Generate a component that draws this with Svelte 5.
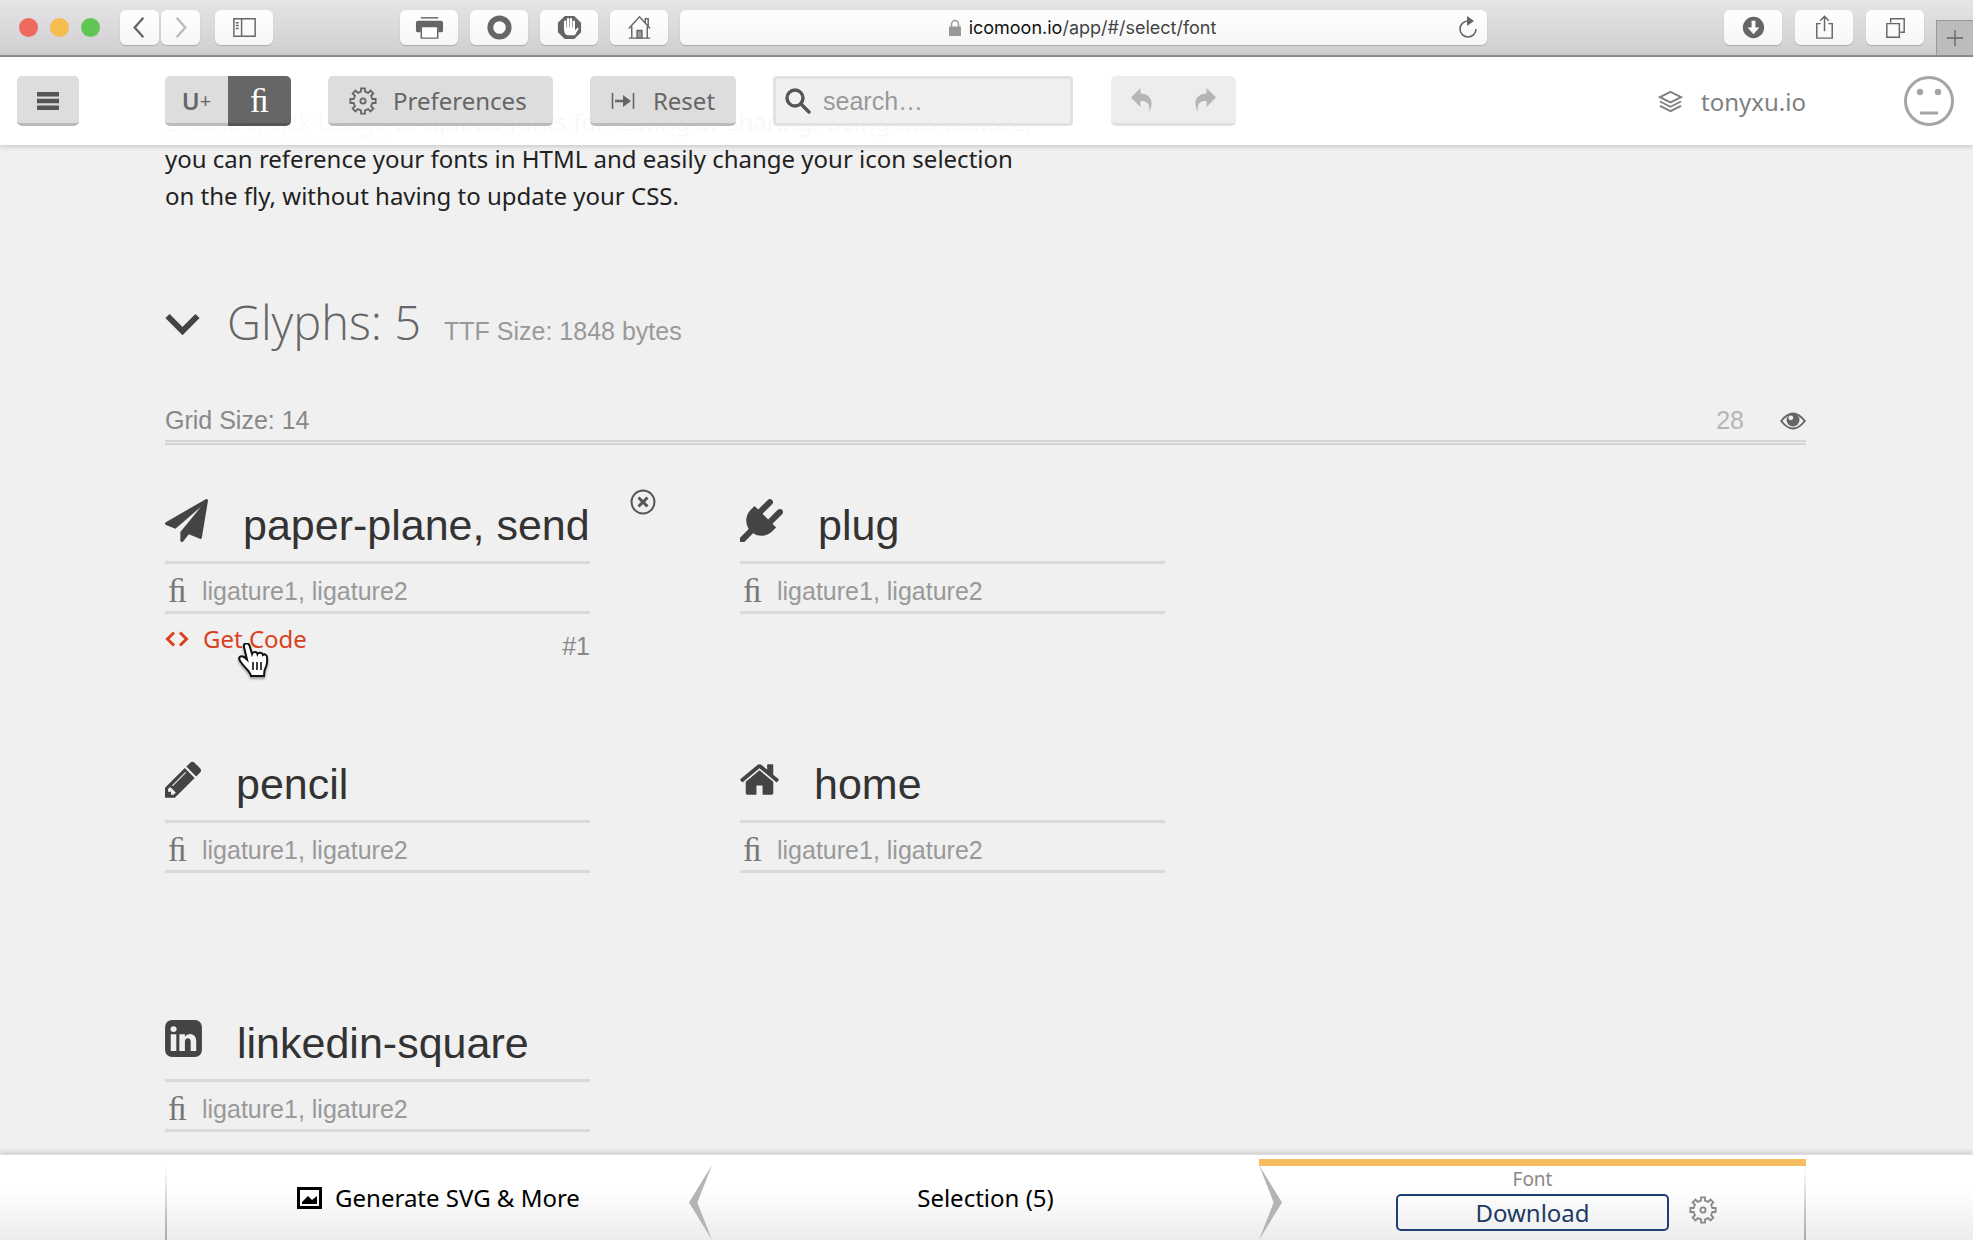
<script>
  const glyphs = [
    {
      name: 'paper-plane, send',
      box: '0 0 1792 1792',
      width: 43,
      active: true,
      path: 'M1764 11q33 24 27 64l-256 1536q-5 29-32 45-14 8-31 8-11 0-24-5l-453-185-242 295q-18 23-49 23-13 0-22-4-19-7-30.5-23.5t-11.5-36.5v-349l864-1059-1069 925-395-162q-37-14-40-55-2-40 32-59l1664-960q15-9 32-9 20 0 36 11z',
    },
    {
      name: 'plug',
      box: '0 0 1792 1792',
      width: 43,
      path: 'M1755 453q37 38 37 90.5t-37 90.5l-401 400 150 150-160 160q-163 163-389.5 186.5t-411.5-100.5l-362 362h-181v-181l362-362q-124-185-100.5-411.5t186.5-389.5l160-160 150 150 400-401q38-37 91-37t90 37 37 90.5-37 90.5l-400 401 234 234 401-400q38-37 91-37t90 37z',
    },
    {
      name: 'pencil',
      box: '128 0 1515 1792',
      width: 36,
      path: 'M491 1536l91-91-235-235-91 91v107h128v128h107zm523-928q0-22-22-22-10 0-17 7l-542 542q-7 7-7 17 0 22 22 22 10 0 17-7l542-542q7-7 7-17zm-54-192l416 416-832 832h-416v-416zm683 96q0 53-37 90l-166 166-416-416 166-165q36-38 90-38 53 0 91 38l235 234q37 39 37 91z',
    },
    {
      name: 'home',
      box: '80 0 1632 1792',
      width: 39,
      path: 'M1472 992v480q0 26-19 45t-45 19h-384v-384h-256v384h-384q-26 0-45-19t-19-45v-480q0-1 .5-3t.5-3l575-474 575 474q1 2 1 6zm223-69l-62 74q-8 9-21 11h-3q-13 0-21-7l-692-577-692 577q-12 8-24 7-13-2-21-11l-62-74q-8-10-7-23.5t11-21.5l719-599q32-26 76-26t76 26l244 204v-195q0-14 9-23t23-9h192q14 0 23 9t9 23v408l219 182q10 8 11 21.5t-7 23.5z',
    },
    {
      name: 'linkedin-square',
      box: '128 0 1536 1792',
      width: 37,
      path: 'M365 1414h231v-694h-231v694zm246-908q-1-52-36-86t-93-34-94.5 34-36.5 86q0 51 35.5 85.5t92.5 34.5h1q59 0 95-34.5t36-85.5zm585 908h231v-398q0-154-73-233t-193-79q-136 0-209 117h2v-101h-231q3 66 0 694h231v-388q0-38 7-56 15-35 45-59.5t74-24.5q116 0 116 157v371zm468-998v960q0 119-84.5 203.5t-203.5 84.5h-960q-119 0-203.5-84.5t-84.5-203.5v-960q0-119 84.5-203.5t203.5-84.5h960q119 0 203.5 84.5t84.5 203.5z',
    },
  ];

  // Outline of a cog: each tooth is a flat top between two flat valleys.
  function cog(teeth, outer, inner) {
    const step = (Math.PI * 2) / teeth;
    const at = (r, a) => `${(r * Math.sin(a)).toFixed(2)} ${(-r * Math.cos(a)).toFixed(2)}`;
    let d = '';
    for (let i = 0; i < teeth; i++) {
      const a = i * step;
      d += `${i ? 'L' : 'M'}${at(outer, a - step * 0.2)}L${at(outer, a + step * 0.2)}`;
      d += `L${at(inner, a + step * 0.27)}L${at(inner, a + step * 0.73)}`;
    }
    return d + 'Z';
  }
  const cogPath = cog(8, 12.8, 9.6);
</script>

{#snippet gear()}
  <svg class="gear" viewBox="-14 -14 28 28" aria-hidden="true">
    <path d={cogPath} />
    <circle r="2.600" />
  </svg>
{/snippet}

<div class="app">
  <div class="top">
    <div class="chrome">
      <div class="lights">
        <span class="light red"></span><span class="light yellow"></span><span class="light green"></span>
      </div>
      <div class="nav">
        <button class="tool small" aria-label="Back"><svg viewBox="0 0 30 30"><path class="heavy" d="M19 5 10 15l9 10" /></svg></button>
        <button class="tool small faint" aria-label="Forward"><svg viewBox="0 0 30 30"><path class="heavy" d="M11 5l9 10-9 10" /></svg></button>
      </div>
      <button class="tool sidebar" aria-label="Sidebar">
        <svg viewBox="0 0 30 30"><path d="M4 6h22v18H4zM12 6v18M6 10h3M6 13h3M6 16h3" /></svg>
      </button>
      <div class="extensions">
        <button class="tool" aria-label="Print">
          <svg viewBox="0 0 30 30"><path d="M6 5h18" /><path class="solid" d="M3 8q-2 0-2 2v8q0 2 2 2h3v-5h18v5h3q2 0 2-2v-8q0-2-2-2z" /><path d="M6.500 14h17v12h-17z" fill="#fff" /></svg>
        </button>
        <button class="tool" aria-label="Record">
          <svg viewBox="0 0 30 30"><circle class="ring" cx="15" cy="15" r="9.500" /></svg>
        </button>
        <button class="tool" aria-label="Block">
          <svg viewBox="0 0 30 30"><path class="solid" d="M10 3h10l7 7v10l-7 7H10l-7-7V10z" /><path class="palm" d="M10.500 17V9M13.500 16V6.500M16.500 16V6.500M19.500 17V9" /><path d="M9.500 15h11v3l3-3 1 1-4 7h-7q-4-1-4-5z" fill="#fff" stroke="none" /></svg>
        </button>
        <button class="tool" aria-label="Home">
          <svg viewBox="0 0 30 30"><path d="M4 16 15 4l11 12M7 14v12M23 14v12M4 26h22M21 10V6h3v8" /><path d="M12.500 26v-8h5v8z" fill="#999" /></svg>
        </button>
      </div>
      <div class="address">
        <svg class="lock" viewBox="0 0 14 18" aria-hidden="true"><path d="M3.500 8V5.500a3.500 4 0 0 1 7 0V8" fill="none" stroke="#999" stroke-width="1.500" /><path d="M1 7.500h12V17H1z" fill="#999" /></svg>
        <span>icomoon.io<span class="route">/app/#/select/font</span></span>
        <button class="reload" aria-label="Reload">
          <svg viewBox="0 0 22 24"><path d="M11 5a8 8 0 1 0 8 8" fill="none" stroke="#666" stroke-width="1.600" /><path d="M10 0l7 5-7 5z" fill="#666" /></svg>
        </button>
      </div>
      <div class="actions">
        <button class="tool" aria-label="Downloads">
          <svg viewBox="0 0 30 30"><circle class="solid" cx="15" cy="15" r="11" /><path d="M13 8h4v7h4l-6 7-6-7h4z" fill="#fff" stroke="none" /></svg>
        </button>
        <button class="tool" aria-label="Share">
          <svg viewBox="0 0 30 30"><path d="M11 11H7v15h16V11h-4M15 19V4M10.500 8 15 3.500 19.500 8" /></svg>
        </button>
        <button class="tool" aria-label="Tabs">
          <svg viewBox="0 0 30 30"><path d="M6 11h13v14H6zM10 10V6h14v14h-4" /></svg>
        </button>
      </div>
      <button class="newtab" aria-label="New tab"><svg viewBox="0 0 20 20"><path d="M10 1v18M1 10h18" fill="none" stroke="#666" stroke-width="1.500" /></svg></button>
    </div>

    <header>
      <button class="btn menu" aria-label="Menu"><svg viewBox="0 0 22 18"><path d="M0 0h22v4.500H0zM0 6.700h22v4.500H0zM0 13.500h22V18H0z" /></svg></button>
      <div class="modes">
        <button class="btn unicode" aria-label="Unicode">U<small>+</small></button>
        <button class="btn liga" aria-label="Ligatures">ﬁ</button>
      </div>
      <button class="btn prefs">{@render gear()}Preferences</button>
      <button class="btn reset">
        <svg viewBox="0 0 24 18" aria-hidden="true"><path d="M1.500 1v16M22.500 1v16" stroke="#666" stroke-width="1.600" /><path d="M4 7.700h8V3l8 6-8 6v-4.700H4z" /></svg>Reset
      </button>
      <label class="search">
        <svg viewBox="0 0 26 26" aria-hidden="true"><circle cx="10" cy="10" r="8" /><path d="M16 16l8 8" /></svg>
        <input type="search" placeholder="search…" aria-label="Search icons" />
      </label>
      <div class="history">
        <button aria-label="Undo"><svg viewBox="0 0 22 24"><path d="M0 9.500 9.500 0v5.500C19 6 24 13 18 24c1.500-8-2-11.500-8.500-11V19z" /></svg></button>
        <button aria-label="Redo"><svg viewBox="0 0 22 24"><path d="M22 9.500 12.500 0v5.500C3 6-2 13 4 24c-1.500-8 2-11.500 8.500-11V19z" /></svg></button>
      </div>
      <a class="project" href="#projects">
        <svg viewBox="0 0 26 24" aria-hidden="true"><path d="M13 2l11 5.500L13 13 2 7.500zM2 12l11 5.500L24 12M2 16.500 13 22l11-5.500" /></svg>tonyxu.io
      </a>
      <button class="face" aria-label="Account">
        <svg viewBox="0 0 50 50"><circle cx="25" cy="25" r="23.500" /><path d="M16 37h18" /><circle class="eye" cx="16" cy="16" r="3.200" /><circle class="eye" cx="34" cy="16" r="3.200" /></svg>
      </button>
    </header>
  </div>

  <main>
    <p class="intro">
      <a href="#usage">Enable Quick Usage</a> to upload fonts for testing or sharing. Using this feature,<br />
      you can reference your fonts in HTML and easily change your icon selection<br />
      on the fly, without having to update your CSS.
    </p>

    <div class="title">
      <button class="fold" aria-label="Collapse"><svg viewBox="0 0 35 22"><path d="M2.500 3 17.500 18 32.500 3" /></svg></button>
      <h1>Glyphs: 5</h1>
      <span class="size">TTF Size: 1848 bytes</span>
    </div>

    <div class="gridbar">
      <span>Grid Size: 14</span>
      <span class="count">28</span>
      <button class="show" aria-label="Preview">
        <svg viewBox="0 0 26 18"><path d="M1.200 9Q13-6 24.800 9 13 24 1.200 9z" fill="none" stroke="#666" stroke-width="2" /><circle cx="13" cy="8" r="6.500" fill="#666" /><circle cx="10.800" cy="5.800" r="2.400" fill="#f0f0f0" /></svg>
      </button>
    </div>

    <div class="cards">
      {#each glyphs as g}
        <section class="card">
          <div class="name">
            <svg width={g.width} height="43" viewBox={g.box} aria-hidden="true"><path d={g.path} /></svg>
            <input value={g.name} aria-label="Glyph name" />
          </div>
          <label class="ligature"><span class="fi">ﬁ</span><input placeholder="ligature1, ligature2" aria-label="Ligatures" /></label>
          {#if g.active}
            <div class="hover">
              <button class="code"><svg viewBox="0 0 24 16" aria-hidden="true"><path d="M9 1.500 2.500 8 9 14.500M15 1.500 21.500 8 15 14.500" /></svg>Get Code</button>
              <span class="index">#1</span>
            </div>
            <button class="remove" aria-label="Remove"><svg viewBox="0 0 26 26"><circle cx="13" cy="13" r="11.500" /><path class="cross" d="M8.500 8.500l9 9M17.500 8.500l-9 9" /></svg></button>
            <svg class="pointer" viewBox="0 0 32 36" aria-hidden="true">
              <path d="M7 4c-1-4 4-5 5.500-1.500L15 11c1-3 5-2.500 5.500 0 1-2 5-1.500 5.500 1 2-1.500 4 0 4 2.500 1 7-1 9-2.500 13L27 33H14c-1-5-6-8-9.500-13-3-4-3-5.500-1-6.500 2.500-1 5 1.500 6.500 3z" />
              <path class="lines" d="M16 19v8M20 19v8M24 19v8" />
            </svg>
          {/if}
        </section>
      {/each}
    </div>
  </main>

  <footer>
    <nav>
      <button class="cell first">
        <svg class="pic" viewBox="0 0 25 22" aria-hidden="true"><path d="M1.500 1.500h22v19h-22z" fill="none" stroke="#000" stroke-width="3" /><path d="M5 17v-2l6-6 4 4 5-4v8z" /></svg>
        Generate SVG &amp; More
        <svg class="arrow left" viewBox="0 0 22 76" preserveAspectRatio="none" aria-hidden="true"><path d="M22 0 0 38l22 38L8 38z" /></svg>
      </button>
      <button class="cell">Selection (5)</button>
      <div class="cell last">
        <svg class="arrow right" viewBox="0 0 22 76" preserveAspectRatio="none" aria-hidden="true"><path d="M0 0l22 38L0 76l14-38z" /></svg>
        <span class="kind">Font</span>
        <button class="download">Download</button>
        <button class="options" aria-label="Font settings">{@render gear()}</button>
      </div>
    </nav>
  </footer>
</div>

<style>
  :global(body) { background: #f0f0f0; }
  * { box-sizing: border-box; }
  button { font: inherit; color: inherit; border: 0; padding: 0; background: none; cursor: pointer; }
  input { font: inherit; color: inherit; border: 0; padding: 0; background: none; outline: 0; min-width: 0; }
  a { color: inherit; text-decoration: none; }
  svg { display: block; flex: none; }

  .app {
    min-height: 100vh;
    display: flex;
    flex-direction: column;
    font: 24px/37px "Noto Sans", "Open Sans", sans-serif;
    color: #222;
  }
  .top { position: sticky; top: 0; z-index: 2; }

  .chrome {
    display: flex;
    align-items: center;
    height: 57px;
    padding-left: 19px;
    background: linear-gradient(#e6e4e6, #d0ced0);
    border-bottom: 2px solid #918f91;
  }
  .lights { display: flex; gap: 12px; }
  .light { width: 19px; height: 19px; border-radius: 50%; }
  .red { background: #ee6a5f; }
  .yellow { background: #f5bd4f; }
  .green { background: #61c554; }
  .nav { display: flex; gap: 2px; margin-left: 20px; }
  .tool {
    display: grid;
    place-items: center;
    width: 58px;
    height: 35px;
    border-radius: 6px;
    background: linear-gradient(#fff, #f6f6f6);
    box-shadow: 0 1px 1px #aaa;
  }
  .tool.small { width: 39px; }
  .tool svg { width: 29px; height: 29px; fill: none; stroke: #666; stroke-width: 1.5; }
  .tool .heavy { stroke-width: 2.4; }
  .tool.faint svg { stroke: #bbb; }
  .tool .solid { fill: #666; stroke: none; }
  .tool .ring { stroke-width: 6; }
  .tool .palm { stroke: #fff; stroke-width: 2.4; stroke-linecap: round; }
  .sidebar { margin-left: 15px; }
  .extensions { display: flex; gap: 12px; margin: 0 12px 0 127px; }
  .address {
    flex: 1;
    display: flex;
    align-items: center;
    justify-content: center;
    gap: 7px;
    height: 35px;
    padding: 0 8px 0 34px;
    border-radius: 6px;
    background: linear-gradient(#fff, #f6f6f6);
    box-shadow: 0 1px 1px #aaa;
    font: 18px/24px Inter, Roboto, sans-serif;
    color: #111;
  }
  .route { color: #444; }
  .lock { width: 14px; height: 18px; margin-left: auto; }
  .reload { margin-left: auto; }
  .reload svg { width: 22px; height: 24px; }
  .actions { display: flex; gap: 13px; margin: 0 12px 0 237px; }
  .newtab {
    display: grid;
    place-items: center;
    align-self: flex-end;
    width: 37px;
    height: 35px;
    background: #bdbbbd;
    border: solid #999;
    border-width: 1px 0 0 1px;
  }
  .newtab svg { width: 18px; height: 18px; }

  header {
    display: flex;
    align-items: center;
    height: 88px;
    padding: 0 19px 0 17px;
    background: rgba(255, 255, 255, 0.97);
    box-shadow: 0 1px 6px rgba(0, 0, 0, 0.2);
    color: #666;
  }
  .btn {
    display: flex;
    align-items: center;
    justify-content: center;
    height: 50px;
    padding-top: 2px;
    border-radius: 5px;
    background: #ddd;
    border-bottom: 3px solid #bbb;
  }
  .menu { width: 62px; margin-right: 86px; }
  .menu svg { width: 22px; height: 18px; fill: #555; }
  .modes { display: flex; margin-right: 37px; }
  .modes .btn { width: 63px; }
  .unicode { border-radius: 5px 0 0 5px; font-weight: 600; }
  .unicode small { font-size: 20px; font-weight: 400; }
  .modes .liga {
    border-radius: 0 5px 5px 0;
    background: #666;
    border-color: #555;
    color: #fff;
    font: 34px/37px "Liberation Serif", serif;
  }
  .prefs { gap: 16px; justify-content: flex-start; padding-left: 21px; width: 225px; margin-right: 37px; }
  .gear { width: 28px; height: 28px; fill: none; stroke: #666; stroke-width: 1.8; }
  .reset { gap: 18px; width: 146px; margin-right: 37px; }
  .reset svg { width: 24px; height: 18px; fill: #666; }
  .search {
    display: flex;
    align-items: center;
    gap: 12px;
    width: 300px;
    height: 50px;
    padding: 0 9px;
    background: #f0f0f0;
    border: 3px solid #e2e2e2;
    border-radius: 4px;
    font-family: "Liberation Sans", sans-serif;
    font-size: 25px;
  }
  .search svg { width: 26px; height: 26px; fill: none; stroke: #555; stroke-width: 3.4; stroke-linecap: round; }
  .search input { flex: 1; }
  .search input::placeholder { color: #999; }
  .history {
    display: flex;
    justify-content: space-around;
    align-items: center;
    width: 125px;
    height: 50px;
    margin-left: 38px;
    border-radius: 5px;
    background: #ededed;
    border-bottom: 3px solid #e0e0e0;
  }
  .history svg { width: 22px; height: 24px; fill: #b5b5b5; }
  .project { display: flex; align-items: center; gap: 18px; margin-left: auto; color: #808080; }
  .project svg { width: 25px; height: 23px; fill: none; stroke: #808080; stroke-width: 2; }
  .face { margin-left: 98px; }
  .face svg { width: 50px; height: 50px; fill: none; stroke: #a5a5a5; stroke-width: 3; }
  .face .eye { fill: #a5a5a5; stroke: none; }

  main { flex: 1; margin-top: -42px; padding: 0 167px 16px 165px; }
  .intro { margin: 0; }
  .intro a { color: #d9411e; border-bottom: 2px solid #e08a70; }
  .title { display: flex; align-items: baseline; margin-top: 78px; line-height: 60px; }
  .fold { align-self: center; padding-bottom: 6px; }
  .fold svg { width: 35px; height: 22px; fill: none; stroke: #444; stroke-width: 6; }
  h1 { margin: 0 23px 0 27px; font: 300 47px/60px "Open Sans", "Noto Sans", sans-serif; color: #666; }
  .size, .gridbar { font-family: "Liberation Sans", sans-serif; font-size: 25px; color: #999; }
  .gridbar {
    display: flex;
    align-items: center;
    margin-top: 41px;
    padding-bottom: 1px;
    border-bottom: 5px double #d4d4d4;
    color: #888;
  }
  .count { margin-left: auto; color: #b5b5b5; }
  .show { margin-left: 36px; }
  .show svg { width: 26px; height: 18px; }

  .cards { display: grid; grid-template-columns: repeat(2, minmax(0, 425px)); gap: 135px 150px; padding-top: 45px; }
  .card { position: relative; font-family: "Liberation Sans", sans-serif; }
  .name {
    display: flex;
    align-items: flex-start;
    gap: 35px;
    height: 74px;
    padding-top: 9px;
    border-bottom: 3px solid #dadada;
    font-size: 43px;
    color: #444;
  }
  .name svg { fill: #444; }
  .name input { flex: 1; height: 52px; color: #333; }
  .ligature { display: flex; align-items: center; height: 50px; padding-top: 7px; border-bottom: 3px solid #dadada; font-size: 25px; }
  .fi { width: 37px; padding-left: 3px; font: 34px/40px "Liberation Serif", serif; color: #777; }
  .ligature input { flex: 1; }
  .ligature input::placeholder { color: #999; }
  .hover {
    position: absolute;
    top: 100%;
    left: 0;
    right: 0;
    display: flex;
    justify-content: space-between;
    padding-top: 6px;
  }
  .code { display: flex; align-items: center; gap: 14px; height: 37px; font-family: "Noto Sans", sans-serif; color: #d9411e; }
  .code svg { width: 24px; height: 16px; fill: none; stroke: #d9411e; stroke-width: 3; }
  .index { padding-top: 8px; font-size: 25px; color: #888; }
  .remove { position: absolute; top: -1px; left: 465px; }
  .remove svg { width: 26px; height: 26px; fill: none; stroke: #555; stroke-width: 2; }
  .remove .cross { stroke-width: 3; }
  .pointer { position: absolute; top: 153px; left: 72px; width: 32px; height: 36px; fill: #fff; stroke: #111; stroke-width: 2; filter: drop-shadow(0 2px 1px rgba(0, 0, 0, 0.35)); }

  footer {
    position: sticky;
    bottom: 0;
    z-index: 2;
    padding: 0 167px 0 165px;
    background: linear-gradient(#fff 40%, #ececec);
    border-top: 1px solid #ddd;
    box-shadow: 0 -1px 6px rgba(0, 0, 0, 0.2);
  }
  nav { display: grid; grid-template-columns: repeat(3, 1fr); height: 85px; }
  .cell { position: relative; display: flex; align-items: center; justify-content: center; gap: 13px; color: #000; }
  .pic { width: 25px; height: 22px; }
  .first::before, .last::after {
    content: "";
    position: absolute;
    top: 10px;
    bottom: 0;
    width: 2px;
    background: linear-gradient(transparent, #aaa);
  }
  .first::before { left: 0; }
  .last::after { right: 0; }
  .arrow { position: absolute; bottom: 0; width: 23px; height: 75px; fill: #b4b4b4; }
  .left { right: 0; }
  .right { left: 0; }
  .last { display: grid; grid-template-columns: 1fr 273px 1fr; grid-template-rows: 30px 37px; align-content: start; gap: 0 20px; padding-top: 9px; }
  .last::before { content: ""; position: absolute; top: 4px; left: 0; right: 0; height: 7px; background: #f7bc60; }
  .kind { grid-column: 2; text-align: center; font-size: 19px; line-height: 26px; color: #888; }
  .download { grid-column: 2; height: 37px; border: 2px solid #1c3f74; border-radius: 5px; line-height: 33px; color: #1c3a64; }
  .options { justify-self: start; align-self: start; }
  .options .gear { height: 32px; stroke: #888; }
  .pointer .lines { stroke-width: 1.6; }
</style>
